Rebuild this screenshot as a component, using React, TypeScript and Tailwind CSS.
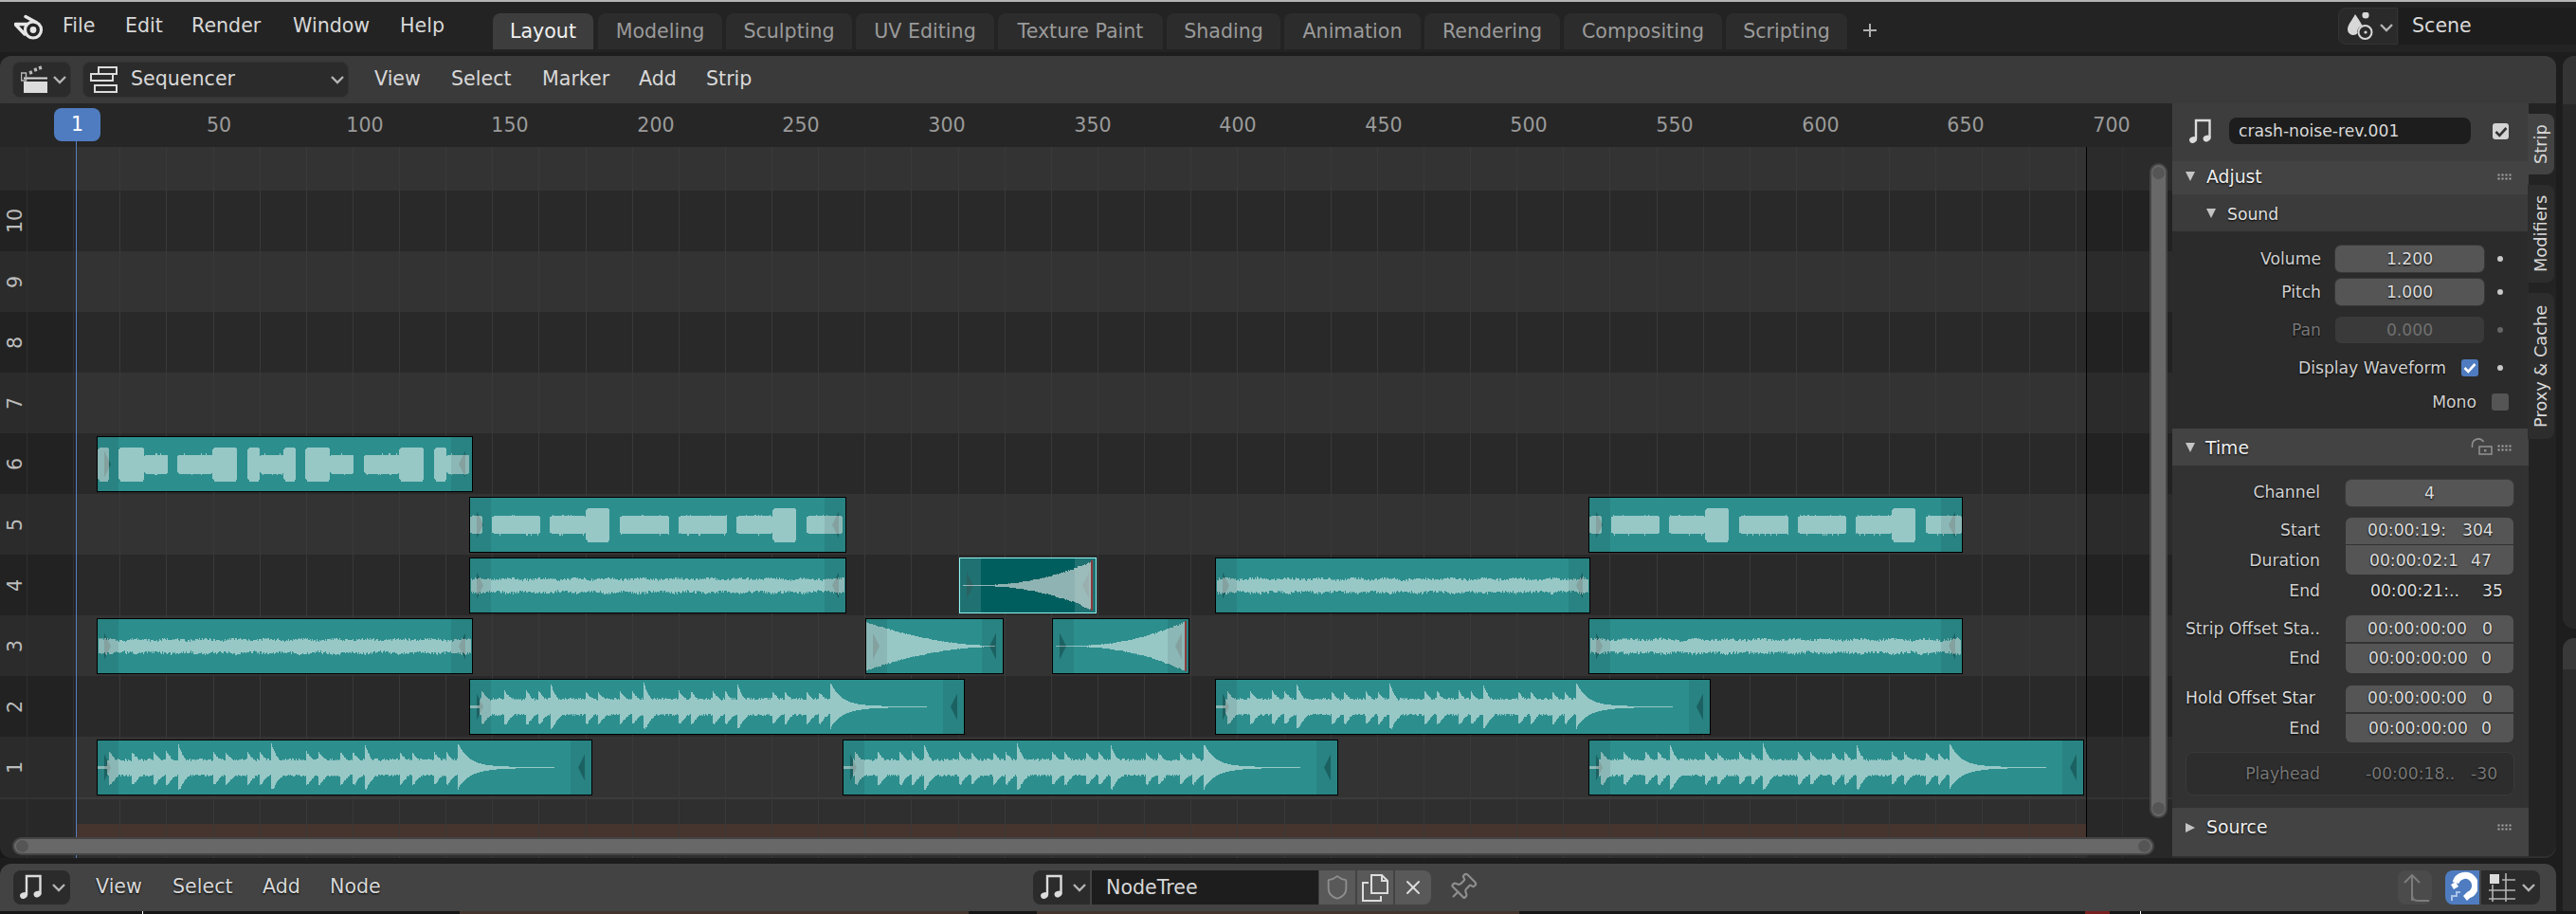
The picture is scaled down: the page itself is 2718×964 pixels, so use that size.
import { useId } from 'react'
import { Pin, Shield, X } from 'lucide-react'

type Kind = 'blocksA' | 'blocksB' | 'noise' | 'drum' | 'fadeOut' | 'fadeIn'

const strips: { x: number; ch: number; w: number; kind: Kind; seed: number; selected?: boolean; red?: number }[] = [
  { x: 102, ch: 6, w: 397, kind: 'blocksA', seed: 1 },
  { x: 495, ch: 5, w: 398, kind: 'blocksB', seed: 2 },
  { x: 1676, ch: 5, w: 395, kind: 'blocksB', seed: 3 },
  { x: 495, ch: 4, w: 398, kind: 'noise', seed: 4 },
  { x: 1012, ch: 4, w: 145, kind: 'fadeIn', seed: 5, selected: true, red: 139 },
  { x: 1282, ch: 4, w: 396, kind: 'noise', seed: 6 },
  { x: 102, ch: 3, w: 397, kind: 'noise', seed: 7 },
  { x: 913, ch: 3, w: 146, kind: 'fadeOut', seed: 8 },
  { x: 1110, ch: 3, w: 145, kind: 'fadeIn', seed: 9, red: 140 },
  { x: 1676, ch: 3, w: 395, kind: 'noise', seed: 10 },
  { x: 495, ch: 2, w: 523, kind: 'drum', seed: 11 },
  { x: 1282, ch: 2, w: 523, kind: 'drum', seed: 12 },
  { x: 102, ch: 1, w: 523, kind: 'drum', seed: 13 },
  { x: 889, ch: 1, w: 523, kind: 'drum', seed: 14 },
  { x: 1676, ch: 1, w: 523, kind: 'drum', seed: 15 },
]

const segsA = [[1, 13, 18], [23, 50, 18], [50, 75, 10], [85, 122, 10], [122, 148, 18], [159, 172, 18], [172, 197, 10], [197, 210, 18], [220, 246, 18], [246, 271, 10], [282, 319, 10], [319, 345, 18], [356, 369, 18], [369, 393, 10]]
const segsB = [[1, 14, 9.5], [24, 75, 9.5], [85, 123, 9.5], [123, 148, 18], [159, 211, 9.5], [221, 272, 9.5], [282, 320, 9.5], [320, 345, 18], [356, 394, 9.5]]

const rnd = (seed: number, i: number) => {
  const s = Math.sin(i * 12.9898 + seed * 78.233) * 43758.5453
  return s - Math.floor(s)
}

function envelope(kind: Kind, x: number, w: number, seed: number): [number, number] {
  const r1 = rnd(seed, x)
  const r2 = rnd(seed + 50, x)
  if (kind === 'blocksA' || kind === 'blocksB') {
    const seg = (kind === 'blocksA' ? segsA : segsB).find((s) => x >= s[0] && x < s[1])
    if (!seg) return [0, 0]
    const edge = Math.min(Math.min(x - seg[0], seg[1] - x) / 2, 1)
    const up = seg[2] * (0.88 + 0.12 * edge) + (seg[2] < 12 && r1 > 0.92 ? 1.5 : 0)
    const down = seg[2] * (0.88 + 0.12 * edge) + (seg[2] < 12 && r2 > 0.9 ? 1.5 : 0)
    return [up, down]
  }
  if (kind === 'noise') {
    if (x < 2 || x > w - 3) return [0, 0]
    const slow = Math.sin(x / 5.5) * 0.8
    return [5.5 + slow + r1 * 2.8, 5.5 + slow + r2 * 3.2]
  }
  if (kind === 'fadeOut') {
    const t = (x - 1) / 135
    if (t > 1 || t < 0) return [0, 0]
    const a = 24 * Math.pow(1 - t, 1.9) + 0.6
    return [a + r1 * 1.4 * (1 - t), a + r2 * 1.4 * (1 - t)]
  }
  if (kind === 'fadeIn') {
    if (x < 4 || x > 140) return [0, 0]
    if (x < 30) return [0.6, 0.6]
    const t = (x - 30) / 110
    const a = 24 * Math.pow(t, 2) + 0.8
    return [a + r1 * 2 * t, a + r2 * 2 * t]
  }
  // drum loop, four bars then a long tail
  if (x < 1 || x > 485) return [0, 0]
  if (x < 11) return [1.5, 1.5]
  let up = 7 + r1
  let down = 7 + r2
  for (let bar = 0; bar < 4; bar++) {
    const offs = [24, 37, 60, 73, 85.5]
    offs.forEach((o, i) => {
      const s = o + bar * 98.4 - (bar === 0 && i === 0 ? 11 : 0)
      if (x < s) return
      const big = i === 4
      up = Math.max(up, (big ? 25 : 16) * Math.exp(-(x - s) / (big ? 7 : 10)))
      down = Math.max(down, (big ? 22 : 17) * Math.exp(-Math.max(x - s - 2, 0) / 10))
    })
  }
  if (x > 381) {
    const tail = Math.max(1 - (x - 381) / 104, 0)
    up = 24 * Math.exp(-(x - 381) / 11) + 1.8 * tail
    down = 20 * Math.exp(-(x - 381) / 13) + 1.8 * tail
    return [up, down]
  }
  return [up + r1 * 1.5, down + r2 * 1.5]
}

function wavePath(kind: Kind, w: number, seed: number) {
  const cy = 29.5
  const cols: { x: number; up: number; down: number }[] = []
  for (let x = 0; x < w; x++) {
    const [up, down] = envelope(kind, x, w, seed)
    cols.push({ x, up, down })
  }
  return cols
    .filter((c) => c.up > 0)
    .map((c) => `M${c.x} ${(cy - c.up).toFixed(1)}V${(cy + c.down).toFixed(1)}h1V${(cy - c.up).toFixed(1)}z`)
    .join('')
}

function Strip({ x, ch, w, kind, seed, selected, red }: (typeof strips)[number]) {
  const id = useId()
  const d = wavePath(kind, w, seed)
  const h = 59
  const tris = `M8 ${h / 2 - 14}L15 ${h / 2}L8 ${h / 2 + 14}zM${w - 8} ${h / 2 - 14}L${w - 15} ${h / 2}L${w - 8} ${h / 2 + 14}z`
  return (
    <div
      className={`absolute box-border border ${selected ? 'border-[#8ef7f5] bg-[#005e5f]' : 'border-black bg-[#2c8f8e]'}`}
      style={{ left: x, top: 460 + (6 - ch) * 64, width: w, height: h }}
    >
      <svg className="absolute -top-px -left-px" width={w} height={h} viewBox={`0 0 ${w} ${h}`}>
        <clipPath id={id}>
          <path d={d} />
        </clipPath>
        <path d={tris} fill={selected ? '#0e4d4e' : '#1f6a6b'} />
        <path d={d} fill={selected ? '#8fb3b2' : '#97c8c6'} shapeRendering="crispEdges" />
        <path d={tris} fill="#8a9a99" fillOpacity="0.55" clipPath={`url(#${id})`} />
        <rect x="1" y="1" width="22" height={h - 2} fill={selected ? '#ffffff' : '#000000'} fillOpacity={selected ? 0.12 : 0.08} />
        <rect x={w - 23} y="1" width="22" height={h - 2} fill={selected ? '#ffffff' : '#000000'} fillOpacity={selected ? 0.12 : 0.08} />
        {red && <rect x={red} y="3" width="2" height={h - 6} fill="#8d3b3c" />}
      </svg>
    </div>
  )
}

const tabs = [
  { name: 'Layout', x: 520, w: 106, on: true },
  { name: 'Modeling', x: 631, w: 131 },
  { name: 'Sculpting', x: 766, w: 133 },
  { name: 'UV Editing', x: 903, w: 146 },
  { name: 'Texture Paint', x: 1053, w: 174 },
  { name: 'Shading', x: 1231, w: 120 },
  { name: 'Animation', x: 1355, w: 144 },
  { name: 'Rendering', x: 1503, w: 143 },
  { name: 'Compositing', x: 1650, w: 167 },
  { name: 'Scripting', x: 1821, w: 128 },
]

const Chevron = ({ className = '' }: { className?: string }) => (
  <svg className={`absolute ${className}`} width="16" height="10" viewBox="0 0 16 10">
    <path d="M2 2l6 6 6-6" fill="none" stroke="#b4b4b4" strokeWidth="2.4" />
  </svg>
)

const Note = ({ className = '' }: { className?: string }) => (
  <svg className={`absolute ${className}`} width="26" height="28" viewBox="0 0 26 28">
    <path d="M8 23V3h14.5v19" fill="none" stroke="#dcdcdc" strokeWidth="2.4" />
    <ellipse cx="5" cy="23.5" rx="4" ry="3.2" fill="#dcdcdc" transform="rotate(-22 5 23.5)" />
    <ellipse cx="19.5" cy="22" rx="4" ry="3.2" fill="#dcdcdc" transform="rotate(-22 19.5 22)" />
  </svg>
)

const Grip = ({ className = '' }: { className?: string }) => (
  <svg className={`absolute ${className}`} width="15" height="8" viewBox="0 0 15 8">
    {[0, 1].map((r) =>
      [0, 1, 2, 3].map((c) => <rect key={`${r}${c}`} x={c * 4 + 0.5} y={r * 4 + 0.5} width="2" height="2" fill="#a8a8a8" />),
    )}
  </svg>
)

const TriDown = ({ className = '' }: { className?: string }) => (
  <svg className={`absolute ${className}`} width="10" height="10" viewBox="0 0 10 10">
    <path d="M0 0h10L5 10z" fill="#c4c4c4" />
  </svg>
)

const Check = ({ className = '' }: { className?: string }) => (
  <svg className={`absolute ${className}`} width="14" height="12" viewBox="0 0 14 12">
    <path d="M1.5 6l3.8 3.8L12.5 2" fill="none" stroke="currentColor" strokeWidth="2.6" />
  </svg>
)

const labelCls = 'absolute h-7 text-right leading-7 text-[17.2px] whitespace-nowrap [text-shadow:0_1px_2px_#000]'

const Label = ({ text, right, y, dim }: { text: string; right: number; y: number; dim?: boolean }) => (
  <div className={`${labelCls} ${dim ? 'text-[#777777]' : 'text-[#d0d0d0]'}`} style={{ right: 2718 - right, top: y - 14 }}>
    {text}
  </div>
)

const Val = ({ text, x, y, dim }: { text: string; x: number; y: number; dim?: boolean }) => (
  <div className={`${labelCls} ${dim ? 'text-[#777777]' : 'text-[#dcdcdc]'}`} style={{ left: x, top: y - 14 }}>
    {text}
  </div>
)

const timeFields = [
  { top: 546, h: 28, r: 'rounded-t-md' },
  { top: 575, h: 31, r: 'rounded-b-md' },
  { top: 649, h: 28, r: 'rounded-t-md' },
  { top: 679, h: 31, r: 'rounded-b-md' },
  { top: 723, h: 28, r: 'rounded-t-md' },
  { top: 753, h: 30, r: 'rounded-b-md' },
]

const timeVals = [
  { label: 'Start', y: 559, a: '00:00:19:', ax: 2498, b: '304', bx: 2598 },
  { label: 'Duration', y: 591, a: '00:00:02:1', ax: 2500, b: '47', bx: 2607 },
  { label: 'End', y: 623, a: '00:00:21:..', ax: 2501, b: '35', bx: 2619 },
  { label: 'Strip Offset Sta..', y: 663, a: '00:00:00:00', ax: 2498, b: '0', bx: 2619 },
  { label: 'End', y: 694, a: '00:00:00:00', ax: 2499, b: '0', bx: 2618 },
  { label: 'End', y: 768, a: '00:00:00:00', ax: 2499, b: '0', bx: 2618 },
]

const Dot = ({ y, dim }: { y: number; dim?: boolean }) => (
  <div className={`absolute left-[2635px] h-[6px] w-[6px] rounded-full ${dim ? 'bg-[#666666]' : 'bg-[#c8c8c8]'}`} style={{ top: y - 3 }} />
)

const menuCls = 'absolute h-7 leading-7 text-[20.6px] text-[#d8d8d8] whitespace-nowrap'

export default function App() {
  return (
    <div className="relative h-[964px] w-[2718px] overflow-hidden bg-[#1d1d1d] [font-family:DejaVu_Sans,Verdana,sans-serif]">
      {/* top bar */}
      <div className="absolute top-0 left-0 h-[2px] w-full bg-[#b4b4b4]" />
      <div className="absolute top-[2px] left-0 h-[53px] w-full bg-[#232323]" />
      <svg className="absolute top-[15px] left-[15px]" width="32" height="28" viewBox="0 0 32 28">
        <circle cx="20" cy="16.5" r="8.5" fill="none" stroke="#e6e6e6" strokeWidth="3.2" />
        <circle cx="20" cy="16.5" r="3.4" fill="#e6e6e6" />
        <path d="M12 2.500l11 6M1.500 10.500H13M1.500 11L11 21" stroke="#e6e6e6" strokeWidth="3.4" fill="none" strokeLinecap="round" />
      </svg>
      {[['File', 66], ['Edit', 132], ['Render', 202], ['Window', 309], ['Help', 422]].map(([t, x]) => (
        <div key={t} className={`${menuCls} top-[13px]`} style={{ left: x as number }}>
          {t}
        </div>
      ))}
      {tabs.map((t) => (
        <div
          key={t.name}
          className={`absolute top-[14px] flex h-[38px] items-center justify-center rounded-t-lg text-[20.6px] ${t.on ? 'bg-[#3d3d3d] text-[#f0f0f0]' : 'bg-[#2c2c2c] text-[#9a9a9a]'}`}
          style={{ left: t.x, width: t.w }}
        >
          {t.name}
        </div>
      ))}
      <svg className="absolute top-[24px] left-[1965px]" width="16" height="16" viewBox="0 0 16 16">
        <path d="M8 1v14M1 8h14" stroke="#b0b0b0" strokeWidth="2" />
      </svg>
      {/* scene selector */}
      <div className="absolute top-[8px] left-[2467px] h-[39px] w-[63px] rounded-l-lg border border-[#333333] bg-[#2a2a2a]" />
      <svg className="absolute top-[13px] left-[2476px]" width="30" height="30" viewBox="0 0 30 30">
        <path d="M9 2C6 8 1 13 1 18c0 3.500 3 6 6 6 2 0 3.500-1 4.500-2 -1-3 1-7 5-8C14 9 11 5 9 2z" fill="#d8d8d8" />
        <circle cx="20" cy="3" r="3.6" fill="#d8d8d8" />
        <circle cx="19.5" cy="21" r="7" fill="none" stroke="#d8d8d8" strokeWidth="2" />
        <circle cx="20" cy="21" r="1.6" fill="#d8d8d8" />
      </svg>
      <Chevron className="top-[24px] left-[2510px]" />
      <div className="absolute top-[8px] left-[2531px] h-[39px] w-[187px] bg-[#1d1d1d]" />
      <div className="absolute top-[13px] left-[2545px] h-7 text-[20.6px] leading-7 text-[#d8d8d8]">Scene</div>

      {/* sequencer editor */}
      <div className="absolute top-[59px] left-0 h-[846px] w-[2697px] overflow-hidden rounded-t-xl rounded-b-xl bg-[#2f2f2f]">
        <div className="absolute top-0 left-0 h-[50px] w-full bg-[#3a3a3a]" />
      </div>
      {/* channel rows */}
      {[11, 10, 9, 8, 7, 6, 5, 4, 3, 2, 1].map((ch) => {
        const top = ch === 11 ? 155 : 201 + (10 - ch) * 64
        return (
          <div
            key={ch}
            className={`absolute left-0 w-[2292px] ${ch % 2 ? 'bg-[#333333]' : 'bg-[#292929]'}`}
            style={{ top, height: ch === 11 ? 46 : 64 }}
          />
        )
      })}
      <div className="absolute top-[841px] left-0 h-[2px] w-[2292px] bg-[#3c3c3c]" />
      <div className="absolute top-[869px] left-[80px] h-[14px] w-[2121px] bg-[#46352e]" />
      {Array.from({ length: 46 }).map((_, k) => (
        <div key={k} className="absolute top-[155px] h-[750px] w-px bg-[#393939]" style={{ left: Math.round(28 + k * 49.13) }} />
      ))}
      <div className="absolute top-[155px] left-0 h-[750px] w-[80px] bg-black/15" />
      <div className="absolute top-[155px] left-[2202px] h-[750px] w-[90px] bg-black/15" />
      <div className="absolute top-[155px] left-[2201px] h-[728px] w-px bg-black" />

      {/* header */}
      <div className="absolute top-[65px] left-[13px] h-[38px] w-[62px] rounded-lg border border-[#333333] bg-[#2b2b2b]" />
      <svg className="absolute top-[68px] left-[22px]" width="28" height="31" viewBox="0 0 28 31">
        <rect x="3" y="18" width="25" height="12" fill="#dcdcdc" />
        <path d="M3 14.500h25" stroke="#dcdcdc" strokeWidth="2" />
        <rect x="0.5" y="9" width="5" height="8" fill="none" stroke="#b8b8b8" strokeWidth="1.5" />
        <path d="M9 9l3-1M14 6l3-1M19 4l3-1" stroke="#b8b8b8" strokeWidth="3.5" />
      </svg>
      <Chevron className="top-[79px] left-[55px]" />
      <div className="absolute top-[65px] left-[87px] h-[38px] w-[281px] rounded-lg border border-[#333333] bg-[#2b2b2b]" />
      <svg className="absolute top-[70px] left-[95px]" width="30" height="28" viewBox="0 0 30 28">
        <rect x="9" y="1" width="19" height="7" fill="none" stroke="#dcdcdc" strokeWidth="2" />
        <rect x="1" y="8" width="23" height="7" fill="none" stroke="#dcdcdc" strokeWidth="2" />
        <rect x="5" y="20" width="23" height="7" fill="none" stroke="#dcdcdc" strokeWidth="2" />
      </svg>
      <div className={`${menuCls} top-[69px] left-[138px]`}>Sequencer</div>
      <Chevron className="top-[79px] left-[348px]" />
      {[['View', 395], ['Select', 476], ['Marker', 572], ['Add', 674], ['Strip', 745]].map(([t, x]) => (
        <div key={t} className={`${menuCls} top-[69px]`} style={{ left: x as number }}>
          {t}
        </div>
      ))}

      {/* time ruler */}
      <div className="absolute top-[109px] left-0 h-[46px] w-[2292px] bg-[#262626]" />
      {Array.from({ length: 14 }).map((_, i) => (
        <div
          key={i}
          className="absolute top-[118px] h-7 w-[70px] text-center text-[20.6px] leading-7 text-[#9a9a9a]"
          style={{ left: Math.round(231 + i * 153.6 - 35) }}
        >
          {(i + 1) * 50}
        </div>
      ))}
      <div className="absolute top-[149px] left-[80px] h-[756px] w-px bg-[#5680c2]" />
      <div className="absolute top-[114px] left-[57px] h-[35px] w-[49px] rounded-lg bg-[#4f7cc0] text-center text-[20.6px] leading-[35px] text-white">1</div>

      {/* channel numbers */}
      {[10, 9, 8, 7, 6, 5, 4, 3, 2, 1].map((ch) => (
        <div
          key={ch}
          className="absolute left-[3px] h-[48px] w-[26px] rotate-180 text-center text-[20.6px] leading-[26px] text-[#bcbcbc] [writing-mode:vertical-rl]"
          style={{ top: 233 + (10 - ch) * 64 - 24 }}
        >
          {ch}
        </div>
      ))}

      {strips.map((s) => (
        <Strip key={s.seed} {...s} />
      ))}

      {/* scrollbars */}
      <div className="absolute top-[883px] left-[13px] h-[19px] w-[2260px] rounded-full border-2 border-[#454545] bg-[#686868]">
        <div className="absolute top-[1px] left-[2px] h-[13px] w-[13px] rounded-full bg-[#555555]" />
        <div className="absolute top-[1px] right-[2px] h-[13px] w-[13px] rounded-full bg-[#555555]" />
      </div>
      <div className="absolute top-[172px] left-[2268px] h-[691px] w-[19px] rounded-full border-2 border-[#454545] bg-[#686868]">
        <div className="absolute top-[2px] left-[1px] h-[13px] w-[13px] rounded-full bg-[#555555]" />
        <div className="absolute bottom-[2px] left-[1px] h-[13px] w-[13px] rounded-full bg-[#555555]" />
      </div>

      {/* sidebar */}
      <div className="absolute top-[109px] left-[2292px] h-[794px] w-[376px] bg-[#323232]" />
      <div className="absolute top-[109px] left-[2292px] h-[61px] w-[376px] bg-[#3d3d3d]" />
      <Note className="top-[124px] left-[2309px]" />
      <div className="absolute top-[124px] left-[2352px] h-[28px] w-[255px] rounded-lg bg-[#1d1d1d] pl-[10px] text-[17.2px] leading-[28px] text-[#d8d8d8]">crash-noise-rev.001</div>
      <div className="absolute top-[130px] left-[2630px] h-[17px] w-[17px] rounded-[3px] bg-[#d4d4d4] text-[#333333]">
        <Check className="top-[3px] left-[2px]" />
      </div>

      <div className="absolute top-[170px] left-[2292px] h-[35px] w-[376px] bg-[#434343]" />
      <TriDown className="top-[181px] left-[2306px]" />
      <div className="absolute top-[173px] left-[2328px] h-7 text-[18.8px] leading-7 text-[#eeeeee] [text-shadow:0_1px_2px_#000]">Adjust</div>
      <Grip className="top-[183px] left-[2635px]" />
      <div className="absolute top-[205px] left-[2292px] h-[39px] w-[376px] bg-[#3b3b3b]" />
      <TriDown className="top-[220px] left-[2328px]" />
      <div className="absolute top-[212px] left-[2350px] h-7 text-[17.2px] leading-7 text-[#e0e0e0] [text-shadow:0_1px_2px_#000]">Sound</div>
      <div className="absolute top-[244px] left-[2292px] h-[208px] w-[376px] bg-[#2b2b2b]" />

      <Label text="Volume" right={2449} y={273} />
      <div className="absolute top-[259px] left-[2464px] h-[28px] w-[157px] rounded-md bg-[#555555] text-center text-[17.2px] leading-[28px] text-[#dcdcdc] ring-1 ring-[#383838] [text-shadow:0_1px_2px_#000]">1.200</div>
      <Dot y={273} />
      <Label text="Pitch" right={2449} y={308} />
      <div className="absolute top-[294px] left-[2464px] h-[28px] w-[157px] rounded-md bg-[#555555] text-center text-[17.2px] leading-[28px] text-[#dcdcdc] ring-1 ring-[#383838] [text-shadow:0_1px_2px_#000]">1.000</div>
      <Dot y={308} />
      <Label text="Pan" right={2449} y={348} dim />
      <div className="absolute top-[334px] left-[2464px] h-[28px] w-[157px] rounded-md bg-[#3a3a3a] text-center text-[17.2px] leading-[28px] text-[#707070]">0.000</div>
      <Dot y={348} dim />
      <Label text="Display Waveform" right={2581} y={388} />
      <div className="absolute top-[379px] left-[2597px] h-[18px] w-[18px] rounded-[3px] bg-[#4f7cc0] text-white">
        <Check className="top-[3px] left-[2px]" />
      </div>
      <Dot y={388} />
      <Label text="Mono" right={2613} y={424} />
      <div className="absolute top-[415px] left-[2629px] h-[18px] w-[18px] rounded-[3px] bg-[#555555]" />

      <div className="absolute top-[452px] left-[2292px] h-[39px] w-[376px] bg-[#434343]" />
      <TriDown className="top-[467px] left-[2306px]" />
      <div className="absolute top-[459px] left-[2327px] h-7 text-[18.8px] leading-7 text-[#eeeeee] [text-shadow:0_1px_2px_#000]">Time</div>
      <svg className="absolute top-[462px] left-[2607px]" width="24" height="18" viewBox="0 0 24 18">
        <path d="M1.500 10V7a6.500 6.500 0 0 1 12-3" fill="none" stroke="#8e8e8e" strokeWidth="1.6" />
        <rect x="9" y="9" width="13" height="8" fill="none" stroke="#8e8e8e" strokeWidth="1.6" />
        <rect x="14" y="12" width="2.4" height="2.4" fill="#8e8e8e" />
      </svg>
      <Grip className="top-[469px] left-[2635px]" />

      <Label text="Channel" right={2448} y={519} />
      <div className="absolute top-[506px] left-[2475px] h-[28px] w-[177px] rounded-md bg-[#555555] text-center text-[17.2px] leading-[28px] text-[#dcdcdc] ring-1 ring-[#3a3a3a] [text-shadow:0_1px_2px_#000]">4</div>
      {timeFields.map((f) => (
        <div key={f.top} className={`absolute left-[2475px] w-[177px] bg-[#555555] ${f.r}`} style={{ top: f.top, height: f.h }} />
      ))}
      {timeVals.map((v) => (
        <div key={v.y}>
          <Label text={v.label} right={2448} y={v.y} />
          <Val text={v.a} x={v.ax} y={v.y} />
          <Val text={v.b} x={v.bx} y={v.y} />
        </div>
      ))}
      <Val text="Hold Offset Star" x={2306} y={736} />
      <Val text="00:00:00:00" x={2498} y={736} />
      <Val text="0" x={2619} y={736} />

      <div className="absolute top-[793px] left-[2306px] h-[46px] w-[347px] rounded-lg border border-[#3a3a3a] bg-[#2d2d2d]" />
      <Label text="Playhead" right={2448} y={816} dim />
      <Val text="-00:00:18.." x={2496} y={816} dim />
      <Val text="-30" x={2607} y={816} dim />

      <div className="absolute top-[852px] left-[2292px] h-[51px] w-[376px] bg-[#434343]" />
      <svg className="absolute top-[868px] left-[2306px]" width="10" height="10" viewBox="0 0 10 10">
        <path d="M0 0v10l10-5z" fill="#c4c4c4" />
      </svg>
      <div className="absolute top-[859px] left-[2328px] h-7 text-[18.8px] leading-7 text-[#eeeeee] [text-shadow:0_1px_2px_#000]">Source</div>
      <Grip className="top-[869px] left-[2635px]" />

      {/* sidebar tabs */}
      <div className="absolute top-[109px] left-[2668px] h-[794px] w-[29px] rounded-br-xl bg-[#232323]" />
      {[
        { t: 'Strip', top: 120, h: 64, on: true },
        { t: 'Modifiers', top: 195, h: 103 },
        { t: 'Proxy & Cache', top: 309, h: 154 },
      ].map((b) => (
        <div
          key={b.t}
          className={`absolute left-[2667px] flex w-[28px] rotate-180 items-center justify-center rounded-l-lg text-[17.8px] whitespace-nowrap text-[#d8d8d8] [writing-mode:vertical-rl] ${b.on ? 'bg-[#434343]' : 'bg-[#2d2d2d]'}`}
          style={{ top: b.top, height: b.h }}
        >
          {b.t}
        </div>
      ))}

      {/* next area, only its edge is visible */}
      <div className="absolute top-[59px] left-[2704px] h-[604px] w-[14px] overflow-hidden rounded-l-xl bg-[#282828]">
        <div className="h-[51px] w-full bg-[#343434]" />
      </div>
      <div className="absolute top-[673px] left-[2704px] h-[291px] w-[14px] rounded-tl-xl bg-[#2b2b2b]">
        <div className="h-[33px] w-full rounded-tl-xl bg-[#393939]" />
      </div>

      {/* bottom header */}
      <div className="absolute top-[911px] left-0 h-[50px] w-[2697px] rounded-t-xl bg-[#434343]" />
      <div className="absolute top-[918px] left-[14px] h-[36px] w-[60px] rounded-lg bg-[#2b2b2b]" />
      <Note className="top-[921px] left-[20px]" />
      <Chevron className="top-[931px] left-[54px]" />
      {[['View', 101], ['Select', 182], ['Add', 277], ['Node', 348]].map(([t, x]) => (
        <div key={t} className={`${menuCls} top-[921px] [text-shadow:0_1px_2px_#000]`} style={{ left: x as number }}>
          {t}
        </div>
      ))}
      <div className="absolute top-[918px] left-[1090px] h-[36px] w-[60px] rounded-l-lg bg-[#2b2b2b]" />
      <Note className="top-[921px] left-[1097px]" />
      <Chevron className="top-[931px] left-[1131px]" />
      <div className="absolute top-[918px] left-[1152px] h-[36px] w-[239px] bg-[#1d1d1d] pl-[15px] text-[20.6px] leading-[36px] text-[#d8d8d8]">NodeTree</div>
      <div className="absolute top-[918px] left-[1392px] flex h-[36px] w-[38px] items-center justify-center bg-[#595959]">
        <Shield size={28} strokeWidth={1.6} className="text-[#8e8e8e]" />
      </div>
      <div className="absolute top-[918px] left-[1432px] flex h-[36px] w-[38px] items-center justify-center bg-[#595959]">
        <svg width="30" height="32" viewBox="0 0 30 32">
          <path d="M11 3h11l6 6v13H11zM22 3v6h6" fill="none" stroke="#dcdcdc" strokeWidth="2" />
          <path d="M8 11H2v19h19v-5" fill="none" stroke="#dcdcdc" strokeWidth="2" />
        </svg>
      </div>
      <div className="absolute top-[918px] left-[1472px] flex h-[36px] w-[38px] items-center justify-center rounded-r-lg bg-[#595959]">
        <X size={24} strokeWidth={2} className="text-[#dcdcdc]" />
      </div>
      <Pin size={32} strokeWidth={1.6} className="absolute top-[920px] left-[1527px] rotate-45 text-[#8e8e8e]" />

      <div className="absolute top-[918px] left-[2530px] h-[36px] w-[36px] rounded-lg bg-[#4b4b4b]" />
      <svg className="absolute top-[920px] left-[2534px]" width="30" height="32" viewBox="0 0 30 32">
        <path d="M11 30V3M3 11l8-8 8 8M11 24q0 6 6 6h12" fill="none" stroke="#7c7c7c" strokeWidth="2" />
      </svg>
      <div className="absolute top-[918px] left-[2580px] h-[36px] w-[36px] rounded-l-lg bg-[#4f7cc0]" />
      <svg className="absolute top-[919px] left-[2582px]" width="32" height="34" viewBox="0 0 32 34">
        <path d="M9 12A10.500 10.500 0 1 1 22 25" fill="none" stroke="#ffffff" strokeWidth="7" />
        <path d="M4 14l5-3 3 5-5 3zM17 26l4-4 4 5-4 4z" fill="#ffffff" />
        <path d="M5 31v-5h5v-4h4" fill="none" stroke="#a9c2e8" strokeWidth="2" />
      </svg>
      <div className="absolute top-[918px] left-[2618px] h-[36px] w-[62px] rounded-r-lg bg-[#2b2b2b]" />
      <svg className="absolute top-[921px] left-[2626px]" width="30" height="30" viewBox="0 0 30 30">
        <rect x="1" y="1" width="10" height="10" fill="#dcdcdc" />
        <path d="M18 0v30M0 18h28M4 12v18M0 27h28M14 7h14" stroke="#b4b4b4" strokeWidth="1.6" fill="none" />
      </svg>
      <Chevron className="top-[931px] left-[2660px]" />

      {/* top of the editor below */}
      <div className="absolute top-[961px] left-0 h-[3px] w-full overflow-hidden bg-[#161616]">
        <div className="absolute left-[485px] h-full w-[537px] bg-[#43352e]" />
        <div className="absolute left-[1094px] h-full w-[509px] bg-[#43352e]" />
        <div className="absolute left-[2200px] h-full w-[26px] bg-[#7a1f1f]" />
        <div className="absolute left-[150px] h-full w-px bg-white" />
        <div className="absolute left-[2258px] h-full w-px bg-white" />
      </div>
    </div>
  )
}
